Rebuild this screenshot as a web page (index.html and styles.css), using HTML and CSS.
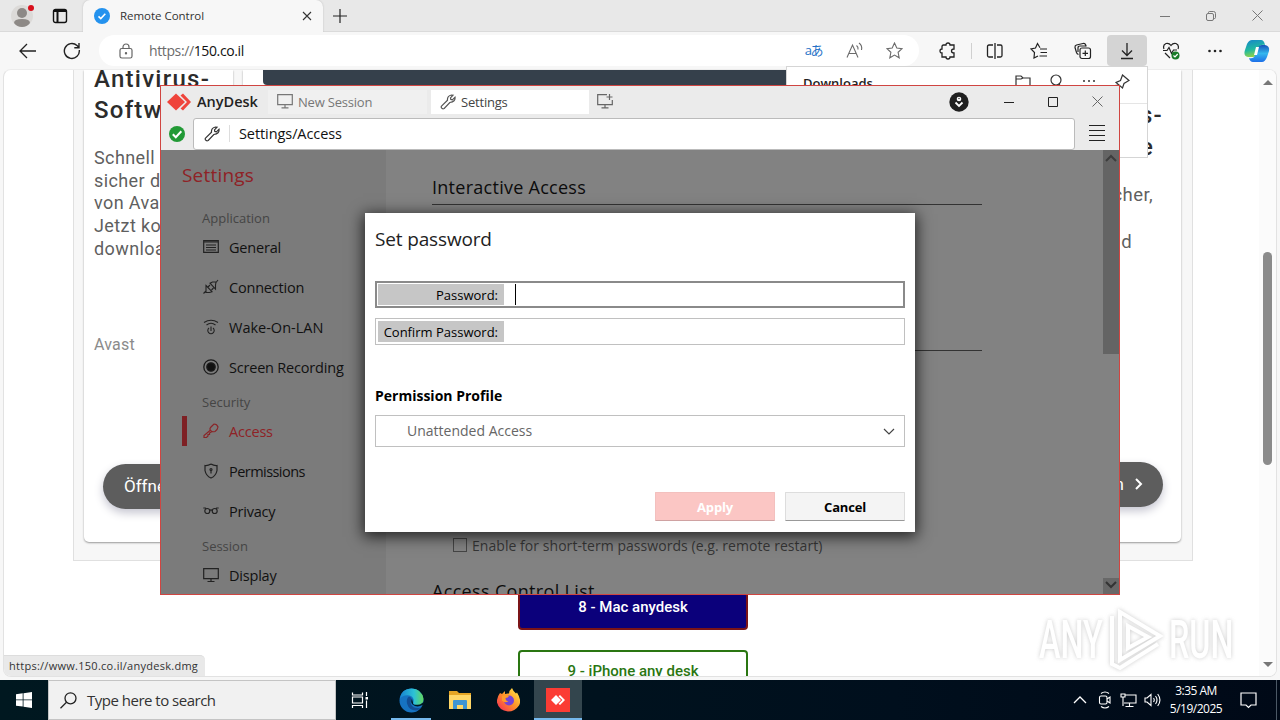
FILE: index.html
```html
<!DOCTYPE html>
<html lang="en">
<head>
<meta charset="utf-8">
<title>Remote Control</title>
<link rel="stylesheet" href="styles.css">
</head>
<body>
<div class="desktop">
  <div class="browser">
    <div class="tabstrip">
      <svg class="profile" width="30" height="32" viewBox="0 0 30 32"><circle cx="14" cy="16" r="11" fill="#dcdad8"/><circle cx="14" cy="13" r="5" fill="#8d8986"/><path d="M6 23q0-4 8-4t8 4q-3 4-8 4t-8-4" fill="#8d8986"/><circle cx="23" cy="8" r="3" fill="#d80f1c"/></svg>
      <svg class="workspace" width="16" height="16" viewBox="0 0 16 16" fill="none" stroke="#111" stroke-width="1.4"><rect x="1.5" y="1.500" width="13" height="13" rx="2"/><path d="M2 3h12M5.500 4v10" stroke-width="2"/></svg>
      <div class="tab">
        <svg width="16" height="16" viewBox="0 0 16 16"><circle cx="8" cy="8" r="8" fill="#2492ee"/><path d="M4.500 8.300l2.300 2.200 4.500-4.700" fill="none" stroke="#fff" stroke-width="1.600"/></svg>
        <span class="tab-title">Remote Control</span>
        <svg width="10" height="10" viewBox="0 0 10 10" stroke="#333" stroke-width="1.100"><path d="M1 1l8 8M9 1l-8 8"/></svg>
      </div>
      <svg class="newtab" width="14" height="14" viewBox="0 0 14 14" stroke="#222" stroke-width="1.200"><path d="M0 7h14M7 0v14"/></svg>
      <div class="winbtns">
        <svg width="10" height="10" viewBox="0 0 10 10" stroke="#777"><path d="M0 5.500h10"/></svg>
        <svg width="10" height="10" viewBox="0 0 10 10" stroke="#777" fill="none"><rect x=".5" y="2.500" width="7" height="7" rx="1.500"/><path d="M2.500 2V1.500q0-1 1-1h4q2 0 2 2v4q0 1-1 1H8"/></svg>
        <svg width="11" height="11" viewBox="0 0 11 11" stroke="#777"><path d="M.5.500l10 10M10.500.500l-10 10"/></svg>
      </div>
    </div>
    <div class="toolbar">
      <svg class="back" width="18" height="16" viewBox="0 0 18 16" fill="none" stroke="#222" stroke-width="1.300"><path d="M17 8H1.500M8 1L1 8l7 7"/></svg>
      <svg class="reload" width="18" height="18" viewBox="0 0 18 18" fill="none" stroke="#222" stroke-width="1.400"><path d="M16.300 8A7.500 7.500 0 1 1 14 3.500L16 5.500M16 1v4.700h-4.700"/></svg>
      <div class="omnibox">
        <svg class="lock" width="14" height="16" viewBox="0 0 14 16" fill="none" stroke="#666" stroke-width="1.200"><rect x="1" y="5.500" width="12" height="9.500" rx="1.800"/><path d="M4 5.500V4a3 3 0 0 1 6 0v1.500"/><circle cx="7" cy="10.300" r=".6" fill="#666"/></svg>
        <span class="url"><i>https://</i>150.co.il</span>
        <span class="translate">aあ</span>
        <svg class="read" width="18" height="17" viewBox="0 0 18 17" fill="none" stroke="#6b6b6b" stroke-width="1.100"><path d="M1 15.500L6.500 3 12 15.500M3 11.500h7M10.500 3.500q2 1.500 1.500 4M13 1q3.500 2.500 2.500 7"/></svg>
        <svg class="star" width="17" height="17" viewBox="0 0 17 17" fill="none" stroke="#6b6b6b" stroke-width="1.100"><path d="M8.500 1l2.300 5 5.200.6-3.900 3.700 1.100 5.500-4.700-2.700-4.700 2.700 1.100-5.500L1 6.600 6.200 6z"/></svg>
      </div>
      <div class="tools">
        <svg width="18" height="18" viewBox="0 0 18 18" fill="none" stroke="#222" stroke-width="1.300"><path d="M4.500 3H7q0-2 2-2t2 2h4v4q-2.500 0-2.500 2t2.500 2v4h-4q0 2-2 2t-2-2H3v-4q-2 0-2-2t2-2V4.500Q3 3 4.500 3z"/></svg>
        <b class="sep"></b>
        <svg width="18" height="16" viewBox="0 0 18 16" fill="none" stroke="#222" stroke-width="1.300"><path d="M7 2H3Q1.500 2 1.500 3.500v9Q1.500 14 3 14h4M11 2h3.500Q16 2 16 3.500v9q0 1.500-1.500 1.500H11M9 0v16"/></svg>
        <svg width="18" height="18" viewBox="0 0 18 18" fill="none" stroke="#222" stroke-width="1.200"><path d="M10 5.700L7.500 1.500 5.500 6 1 7l3.500 3.500L4 16l4-2M10 7h7M10.500 10.500H17M9.500 14H17"/></svg>
        <svg width="18" height="18" viewBox="0 0 18 18" fill="none" stroke="#222" stroke-width="1.200"><rect x="6" y="6" width="10.500" height="10.500" rx="2"/><path d="M11.300 8.500v5.500M8.500 11.300H14M4.500 12.500Q3 12 2.500 10.500L1 5.500Q.7 3.500 2.500 3L9 1.500q2-.5 2.700 1.500l.5 1.500M4 10V6q0-2 2-2h6"/></svg>
        <span class="dl"><svg width="14" height="18" viewBox="0 0 14 18" fill="none" stroke="#222" stroke-width="1.300"><path d="M7 1v12M2 8.500l5 5 5-5M1 16.500h12"/></svg></span>
        <svg width="18" height="18" viewBox="0 0 18 18" fill="none" stroke="#222" stroke-width="1.200"><path d="M2 7q-1.500-4 2-5.500 3-.8 5 2 2-2.800 5-2 3.500 1.500 2 5.500M1 8.500h4l2-3 2.500 6L11.500 8H15M3 11l5 5"/><circle cx="13.500" cy="13.500" r="4" fill="#197b28" stroke="none"/><path d="M11.500 13.500l1.500 1.500 2.700-3" stroke="#fff"/></svg>
        <svg width="18" height="18" viewBox="0 0 18 18" fill="#222"><circle cx="3.500" cy="9" r="1.300"/><circle cx="9" cy="9" r="1.300"/><circle cx="14.500" cy="9" r="1.300"/></svg>
        <svg width="26" height="24" viewBox="0 0 26 24"><defs><linearGradient id="ca" x2=".3" y2="1"><stop stop-color="#1684cc"/><stop offset=".6" stop-color="#20b9a0"/><stop offset="1" stop-color="#8ed34b"/></linearGradient><linearGradient id="cb" x2="0" y2="1"><stop stop-color="#1553b8"/><stop offset=".5" stop-color="#33b7ee"/><stop offset="1" stop-color="#1d6fe8"/></linearGradient></defs><path d="M8 1h9q3 0 4 5-5-1-6 3l-2 6q-1 3-4 3H4q-5-1-3-7l2-6q2-4 5-4" fill="url(#ca)"/><path d="M18 6h3q5 1 4 6l-2 6q-2 5-5 5H9q-3 0-4-4 5 1 6-3l3-7q1-3 4-3" fill="url(#cb)"/><path d="M12 8h3l-2 8h-3z" fill="#fff"/></svg>
      </div>
    </div>
    <div class="viewport">
      <div class="page">
        <div class="frame">
          <section class="card card-left">
            <h3>Antivirus-<br>Softw</h3>
            <p>Schnell<br>sicher d<br>von Ava<br>Jetzt ko<br>downloa</p>
            <small>Avast</small>
            <div class="pill">Öffne</div>
          </section>
          <section class="card card-mid"><div class="banner"></div></section>
          <section class="card card-right">
            <h3>s-<br><span>e</span></h3>
            <p>cher,<br><br><span>d</span></p>
            <div class="pill"><span>n</span><svg width="8" height="12" viewBox="0 0 8 12" fill="none" stroke="#fff" stroke-width="2"><path d="M1 1l5 5-5 5"/></svg></div>
          </section>
        </div>
        <div class="links">
          <a class="link mac">8 - Mac anydesk</a>
          <a class="link iphone">9 - iPhone any desk</a>
        </div>
      </div>
      <div class="scroll"><i class="up"></i><i class="thumb"></i><i class="down"></i></div>
      <div class="status">https://www.150.co.il/anydesk.dmg</div>
      <div class="watermark"><span>ANY</span><svg width="60" height="64" viewBox="0 0 60 64" fill="none" stroke="#fff" stroke-width="4"><path d="M15 4v40M15 4L55 28 15 52zM7 8v48l8 4 38-24M23 18l20 11-20 11z" /></svg><span>RUN</span></div>
    </div>
    <div class="downloads">
      <div class="downloads-head"><span>Downloads</span>
        <svg width="16" height="16" viewBox="0 0 16 16" fill="none" stroke="#333" stroke-width="1.200"><path d="M1 14V2h5l2 2h7v10zM1 5h5l2-1"/></svg>
        <svg width="16" height="16" viewBox="0 0 16 16" fill="none" stroke="#333" stroke-width="1.200"><circle cx="8" cy="6" r="5"/><path d="M11 10l4 5"/></svg>
        <svg width="16" height="16" viewBox="0 0 16 16" fill="#333"><circle cx="3" cy="7" r="1"/><circle cx="8" cy="7" r="1"/><circle cx="13" cy="7" r="1"/></svg>
        <svg width="16" height="16" viewBox="0 0 16 16" fill="none" stroke="#333" stroke-width="1.200"><path d="M8.500 1L15 6.500 10 9.500 8.500 14 2 8.500l4.500-2zM5 11l-4 .5"/></svg>
      </div>
    </div>
  </div>

  <div class="anydesk">
    <div class="ad-title">
      <div class="ad-brand"><svg width="24" height="18" viewBox="0 0 24 18"><path d="M0 9l9-8.500L18 9l-9 8.500z" fill="#ef443b"/><path d="M13.500 2.500L16 .5 24 9l-8 8.500-2.500-2L20 9z" fill="#ef443b"/></svg><span>AnyDesk</span></div>
      <div class="ad-tab"><svg width="16" height="15" viewBox="0 0 16 15" fill="none" stroke="#777" stroke-width="1.200"><path d="M.7.700h14.600v10H.7zM8 11v2.500M4.500 13.800h7"/></svg><span>New Session</span></div>
      <div class="ad-tab active"><svg width="16" height="16" viewBox="0 0 16 16" fill="none" stroke="#555" stroke-width="1.200"><path d="M1.500 12.200l6-6Q7 2 11.500 1l1.500.2-2.500 2.700.3 1.500 1.600.4L15 3.200q.7 4.500-5.200 5.300l-5.600 6q-1.700.8-2.700-.6-.6-1 0-1.700"/></svg><span>Settings</span></div>
      <svg class="ad-new" width="16" height="15" viewBox="0 0 16 15" fill="none" stroke="#666" stroke-width="1.200"><path d="M10 .7H.7v10h14.600V6M8 11v2.500M4.500 13.800h7M12.500 0v6M9.500 3h6"/></svg>
      <svg class="ad-discover" width="20" height="20" viewBox="0 0 20 20"><circle cx="10" cy="10" r="9.700" fill="#202020"/><circle cx="10" cy="7" r="2.300" fill="#fff"/><circle cx="10" cy="6.500" r=".7" fill="#202020"/><path d="M6.500 10.500L10 14l3.500-3.500" fill="none" stroke="#fff" stroke-width="1.800"/></svg>
      <div class="ad-btns"><svg width="10" height="10" viewBox="0 0 10 10" stroke="#222"><path d="M0 5.500h10"/></svg><svg width="10" height="10" viewBox="0 0 10 10" stroke="#222" fill="none"><path d="M.5.500h9v9h-9z"/></svg><svg width="11" height="11" viewBox="0 0 11 11" stroke="#666"><path d="M.5.500l10 10M10.500.500l-10 10"/></svg></div>
    </div>
    <div class="ad-address">
      <svg class="ok" width="16" height="16" viewBox="0 0 16 16"><circle cx="8" cy="8" r="8" fill="#229a36"/><path d="M3.800 8.200l3 3 5.500-6" fill="none" stroke="#fff" stroke-width="2"/></svg>
      <div class="ad-field"><svg width="16" height="16" viewBox="0 0 16 16" fill="none" stroke="#333" stroke-width="1.200"><path d="M1.500 12.200l6-6Q7 2 11.500 1l1.500.2-2.500 2.700.3 1.500 1.600.4L15 3.200q.7 4.500-5.200 5.300l-5.600 6q-1.700.8-2.700-.6-.6-1 0-1.700"/></svg><b></b><span>Settings/Access</span></div>
      <svg class="menu" width="16" height="17" viewBox="0 0 16 17" stroke="#222"><path d="M0 .5h16M0 5.500h16M0 10.500h16M0 15.500h16"/></svg>
    </div>
    <div class="ad-body">
      <nav class="side">
        <h1>Settings</h1>
        <h4 class="n-app">Application</h4>
        <div class="item n-gen"><svg width="16" height="16" viewBox="0 0 16 16" fill="none" stroke="#222" stroke-width="1.200"><path d="M.7 1.700h14.600v11.600H.7zM.7 3h14.600M3 6h10M3 8.500h10M3 11h10"/></svg><span>General</span></div>
        <div class="item n-con"><svg width="16" height="16" viewBox="0 0 16 16" fill="none" stroke="#222" stroke-width="1.100"><path d="M.5 14.500L3 12M13 3.500l2-2.500M3 6.500l6 6.200-2.500.8H3V9.500zM7 4.200l5.500 6V6l.5-3H9.500zM5 8l2-2M8.500 11l2-2"/></svg><span>Connection</span></div>
        <div class="item n-wol"><svg width="16" height="16" viewBox="0 0 16 16" fill="none" stroke="#222" stroke-width="1.100"><path d="M1 3.500q7-4.500 14 0M3.500 6q4.500-3.500 9 0M6 9a3.200 3.200 0 1 0 4 0M8 7.500V12"/></svg><span>Wake-On-LAN</span></div>
        <div class="item n-rec"><svg width="16" height="16" viewBox="0 0 16 16" fill="none" stroke="#1c1c1c" stroke-width="1.300"><circle cx="8" cy="8" r="7.200"/><circle cx="8" cy="8" r="4.200" fill="#111"/></svg><span>Screen Recording</span></div>
        <h4 class="n-sec">Security</h4>
        <div class="item n-acc on"><svg width="16" height="16" viewBox="0 0 16 16" fill="none" stroke="#8a2427" stroke-width="1.200"><path d="M8 4l3-3q3 0 4 3-.5 3-3 4.500-3 .8-4.300-1Q6 6 8 4M7 7.500l-6 5v2h2.500L5 13v-1.500h1.500V10L9 8.500"/></svg><span>Access</span></div>
        <div class="item n-per"><svg width="16" height="16" viewBox="0 0 16 16" fill="none" stroke="#222" stroke-width="1.200"><path d="M8 1q3 1.800 6 1.500v5Q13 13 8 15 3 13 2 7.500v-5Q5 2.800 8 1M8 7v3.500"/><circle cx="8" cy="6.500" r="1"/></svg><span>Permissions</span></div>
        <div class="item n-pri"><svg width="16" height="16" viewBox="0 0 16 16" fill="none" stroke="#222" stroke-width="1.200"><circle cx="4.300" cy="8" r="2.500"/><circle cx="11.700" cy="8" r="2.500"/><path d="M6.500 7.500q1.500-1.300 3 0M.3 5h2l1 .8M15.700 5h-2l-1 .8"/></svg><span>Privacy</span></div>
        <h4 class="n-ses">Session</h4>
        <div class="item n-dis"><svg width="16" height="16" viewBox="0 0 16 16" fill="none" stroke="#222" stroke-width="1.200"><path d="M.7 1.700h14.600v10H.7zM8 12v2.500M4.500 14.500h7"/></svg><span>Display</span></div>
      </nav>
      <main class="main">
        <h2>Interactive Access</h2>
        <div class="rule"></div>
        <label class="check"><i></i><span>Enable for short-term passwords (e.g. remote restart)</span></label>
        <h2 class="acl">Access Control List</h2>
      </main>
      <div class="ad-scroll"><svg width="12" height="8" viewBox="0 0 12 8" fill="none" stroke="#3d3d3d" stroke-width="2"><path d="M1 7l5-5 5 5"/></svg><svg class="dn" width="12" height="8" viewBox="0 0 12 8" fill="none" stroke="#333" stroke-width="2"><path d="M1 1l5 5 5-5"/></svg></div>
    </div>
    <div class="dialog">
      <h2>Set password</h2>
      <div class="input focus"><label>Password:</label><i class="caret"></i></div>
      <div class="input"><label>Confirm Password:</label></div>
      <h5>Permission Profile</h5>
      <div class="select"><span>Unattended Access</span><svg width="12" height="7" viewBox="0 0 12 7" fill="none" stroke="#444" stroke-width="1.200"><path d="M1 1l5 5 5-5"/></svg></div>
      <div class="actions"><button class="apply">Apply</button><button class="cancel">Cancel</button></div>
    </div>
  </div>

  <div class="taskbar">
    <div class="start"><svg width="16" height="16" viewBox="0 0 16 16" fill="#fff"><path d="M0 2.300L6.700 1.300v6.200H0zM7.500 1.200L16 0v7.500H7.500zM0 8.300h6.700v6.300L0 13.700zM7.500 8.300H16V16l-8.500-1.200z"/></svg></div>
    <div class="search"><svg width="17" height="17" viewBox="0 0 17 17" fill="none" stroke="#222" stroke-width="1.300"><circle cx="10.500" cy="6.300" r="5.500"/><path d="M6.500 10.300L.5 16.300"/></svg><span>Type here to search</span></div>
    <div class="app view"><svg width="18" height="18" viewBox="0 0 18 18" fill="none" stroke="#fff" stroke-width="1.200"><path d="M1.500 1.500v2.500h10V1.500M1.500 6h10v6h-10zM1.500 17v-2.500h10V17M15.500 1v4M15.500 9.500V17"/><path d="M14.500 6h2.500v2.500h-2.500z" fill="#fff" stroke="none"/></svg></div>
    <div class="app run"><svg width="25" height="25" viewBox="0 0 25 25"><defs><linearGradient id="ea"><stop stop-color="#1781d0"/><stop offset=".6" stop-color="#2cc2d6"/><stop offset="1" stop-color="#65d85c"/></linearGradient></defs><circle cx="12.500" cy="12.500" r="12" fill="#1673c2"/><path d="M.8 11Q2 .5 12.500.5 23 1 24.500 11q0 6-7 6-4-.5-3-3 1-5-4-6.500Q4 6.500.8 11" fill="url(#ea)"/><path d="M10 8.500q-3 2-2 7 2 7 9 7 3-.5 5-3-7 2-10-3-1-3 1-5-1-2.500-3-3" fill="#124e95"/><path d="M13 11q-1.800 3 .5 5.500 4.500 3.500 10 .5l1.500 2V14l-4 2.500q-8 1.300-7-2z" fill="#001821"/></svg></div>
    <div class="app"><svg width="22" height="20" viewBox="0 0 22 20"><path d="M0 1h8l2 2h12v16H0z" fill="#e5a524"/><path d="M0 5h22v14H0z" fill="#ffd767"/><path d="M4 19v-8q0-1 1-1h12q1 0 1 1v8h-4v-4H8v4z" fill="#3f95d3"/></svg></div>
    <div class="app"><svg width="23" height="24" viewBox="0 0 23 24"><defs><linearGradient id="ff" x1="1" x2="0" y2="1"><stop stop-color="#fff34d"/><stop offset=".5" stop-color="#ff9128"/><stop offset="1" stop-color="#f5205c"/></linearGradient></defs><path d="M3 5l2 1 3-3v3q2-.8 4-.5 0-3 3-5.500 1 3 4 5.500l1-1q5 8 2 13-4 6-11 6-9-1-11-9-.5-5 3-9.500" fill="url(#ff)"/><circle cx="12" cy="12.500" r="5" fill="#7543d5"/><path d="M5 8q4-2 7 0-1 2-3.500 2 0 3 3 3.500-4 2-6.500-1" fill="#ff9b2a"/></svg></div>
    <div class="app run current"><svg width="24" height="24" viewBox="0 0 24 24"><path d="M0 0h24v24H0z" fill="#fb3c34"/><path d="M5 12l5-5 5 5-5 5zM12.500 8.300L14 7l5 5-5 5-1.500-1.300L16.300 12z" fill="#fff"/></svg></div>
    <div class="tray">
      <svg width="14" height="8" viewBox="0 0 14 8" fill="none" stroke="#fff" stroke-width="1.300"><path d="M1 7l6-6 6 6"/></svg>
      <svg class="meet" width="14" height="18" viewBox="0 0 14 18" fill="none" stroke="#fff" stroke-width="1.100"><path d="M3 2.500q4-3 8 0M3 15.500q4 3 8 0"/><rect x="1.500" y="5" width="7.500" height="8" rx="1.500"/><path d="M9 8l3-2v6l-3-2"/></svg>
      <svg class="net" width="17" height="15" viewBox="0 0 17 15" fill="none" stroke="#fff" stroke-width="1.100"><path d="M5 2h11v8H4M9.500 10v3.500M5.500 13.500h8M1 1h4v3H1zM3 4v9"/></svg>
      <svg class="vol" width="17" height="14" viewBox="0 0 17 14" fill="none" stroke="#fff" stroke-width="1.100"><path d="M1 5h2l4-3.500v11L3 9H1zM9.500 5q1.500 2 0 4M11.500 3q3 4 0 8M13.700 1q4.500 6 0 12"/></svg>
      <div class="clock">3:35 AM<br>5/19/2025</div>
      <svg class="note" width="18" height="17" viewBox="0 0 18 17" fill="none" stroke="#fff" stroke-width="1.200"><path d="M1 1h15v12h-5l-2.500 2.500L6 13H1z"/></svg>
      <i class="peek"></i>
    </div>
  </div>
</div>
</body>
</html>
```
FILE: styles.css
```css
* { box-sizing: border-box; }
body { margin: 0; font-family: "Open Sans", "Noto Sans", "Noto Sans CJK JP", sans-serif; }
h1, h2, h3, h4, h5, p { margin: 0; font-weight: 400; }
svg { display: block; flex: none; }
span, label, .clock, .status, button { white-space: nowrap; }
.desktop { position: relative; width: 1280px; height: 720px; overflow: hidden; display: flex; flex-direction: column; }

.browser { position: relative; height: 680px; background: #f7f7f7; display: flex; flex-direction: column; }
.tabstrip { height: 32px; background: #e8e8e8; display: flex; align-items: center; border-bottom: 1px solid #dadada; }
.profile { margin-left: 8px; }
.workspace { margin-left: 14px; }
.tab { align-self: stretch; height: 32px; width: 240px; margin-left: 15px; padding: 0 11px; display: flex; align-items: center; background: #f7f7f7; border-radius: 7px 7px 0 0; box-shadow: 0 0 2px #bbb; clip-path: inset(0 -3px 0 -3px); }
.tab-title { flex: 1; margin: -2px 0 0 10px; font-size: 11.5px; letter-spacing: -.03px; color: #333; }
.newtab { margin-left: 10px; }
.winbtns { margin-left: auto; margin-right: 17px; display: flex; gap: 36px; align-items: center; }
.toolbar { height: 37px; display: flex; align-items: center; }
.back { margin-left: 19px; }
.reload { margin-left: 26px; }
.omnibox { width: 820px; height: 31px; margin-left: 18px; border-radius: 16px; background: #fff; display: flex; align-items: center; }
.lock { margin-left: 20px; }
.url { margin-left: 16px; flex: 1; font-size: 14px; letter-spacing: -.38px; color: #111; }
.url i { font-style: normal; color: #6b6b6b; }
.translate { color: #2672c7; font-size: 13px; letter-spacing: -1.5px; margin-top: -3px; }
.read { margin-left: 24px; }
.star { margin-left: 22px; margin-right: 16px; }
.tools { display: flex; align-items: center; margin-left: 20px; }
.sep { width: 1px; height: 16px; background: #d0d0d0; margin: 0 14px 0 14px; }
.tools svg + svg { margin-left: 26px; }
.dl { width: 40px; height: 31px; margin: 0 15px; background: #d4d4d4; border-radius: 4px; display: flex; align-items: center; justify-content: center; }
.tools > svg:last-child { margin-left: 20px; }

.viewport { position: relative; width: 1274px; height: 608px; margin-left: 3px; background: #fff; border: 1px solid #e2e2e2; border-top-color: #ececec; border-radius: 8px; overflow: hidden; display: flex; }
.page { width: 1255px; padding-left: 69px; }
.frame { width: 1120px; height: 491px; padding: 0 11px 18px 10px; display: flex; gap: 10px; background: #f7f7f7; border: 1px solid #e0e0e0; border-top: 0; }
.card { background: #fff; box-shadow: 0 1px 2px #999; border-radius: 0 0 5px 5px; overflow: hidden; clip-path: inset(0 -3px -4px -3px); }
.card h3 { font: 500 24px/31px Roboto, sans-serif; letter-spacing: 1.25px; color: #2c2c2c; }
.card p { font: 18px/22.700px Roboto, sans-serif; letter-spacing: .4px; color: #5f5f5f; }
.card-left { width: 149px; padding: 0 0 0 10px; }
.card-left h3 { margin-top: -6px; }
.card-left p { margin-top: 21px; }
.card-left small { display: block; margin-top: 73px; font: 16px/22px Roboto, sans-serif; letter-spacing: .2px; color: #8b8b8b; }
.pill { height: 45px; background: #5d5d5d; color: #fff; font: 17px/45px Roboto, sans-serif; box-shadow: 0 4px 10px #c5c5d0; }
.card-left .pill { margin: 108px 0 0 9px; padding-left: 21px; border-radius: 23px 0 0 23px; }
.card-mid { flex: 1; padding-left: 20px; }
.banner { height: 15px; background: #35404b; border-radius: 0 0 0 4px; }
.card-right { width: 140px; text-align: right; padding-right: 18px; }
.card-right h3 { margin-top: 29px; line-height: 32px; }
.card-right h3 span { margin-right: 9px; }
.card-right p { margin: 21px 10px 0 0; font-size: 18.500px; line-height: 23.500px; }
.card-right p span { margin-right: 21px; }
.card-right .pill { margin-top: 207px; border-radius: 0 23px 23px 0; display: flex; align-items: center; justify-content: flex-end; gap: 11px; padding-right: 20px; }
.links { padding: 13px 0 0 445px; }
.link { display: block; width: 230px; height: 46px; border: 2px solid #7b1418; border-radius: 4px; font: 500 15px/43px Roboto, sans-serif; text-align: center; }
.mac { background: #0b007b; color: #fff; margin-top: 10px; }
.iphone { border-color: #2a7611; color: #2a7611; margin-top: 20px; line-height: 38px; }
.scroll { width: 17px; background: #fbfbfb; display: flex; flex-direction: column; align-items: center; padding: 10px 0 9px; margin-left: 1px; }
.up { border: 5px solid transparent; border-top: 0; border-bottom: 5px solid #777; }
.thumb { width: 9px; height: 213px; margin-top: 167px; background: #8b8b8b; border-radius: 5px; }
.down { margin-top: auto; border: 5px solid transparent; border-bottom: 0; border-top: 5px solid #777; }
.status { position: absolute; left: 0; bottom: 0; width: 201px; height: 21px; padding-left: 5px; background: #e9e9e9; border-top: 1px solid #ddd; border-radius: 0 5px 0 0; font-size: 11px; letter-spacing: .27px; line-height: 20px; color: #333; }
.watermark { position: absolute; left: 1035px; top: 538px; display: flex; align-items: center; filter: drop-shadow(0 0 2px #b5b5b5); opacity: .7; }
.watermark span { width: 62px; font: 500 53px/64px Roboto, sans-serif; color: #fff; transform: scaleX(.61); transform-origin: left; }
.watermark svg { margin: 0 4px 0 4px; }
.downloads { position: absolute; left: 786px; top: 66px; width: 362px; height: 92px; background: #fff; border: 1px solid #d5d5d5; }
.downloads-head { height: 37px; border-bottom: 1px solid #e5e5e5; display: flex; gap: 17px; padding: 7px 17px 0 16px; }
.downloads-head span { flex: 1; font-size: 13px; line-height: 18px; font-weight: 600; color: #222; }

.anydesk { position: absolute; left: 160px; top: 85px; width: 960px; height: 510px; background: #ebebeb; border: 1px solid #d04541; display: flex; flex-direction: column; }
.ad-title { height: 31px; display: flex; align-items: center; }
.ad-brand { width: 107px; padding-left: 6px; display: flex; align-items: center; gap: 6px; font-size: 14.500px; font-weight: 600; letter-spacing: 0; color: #222; }
.ad-tab { width: 159px; height: 24px; margin-right: 4px; padding-left: 9px; display: flex; align-items: center; gap: 5px; background: #f0f0f0; font-size: 13px; letter-spacing: -.2px; color: #777; }
.ad-tab span { padding-top: 1px; }
.ad-tab.active { width: 158px; margin-right: 8px; background: #fff; color: #444; }
.ad-discover { margin-left: auto; }
.ad-btns { display: flex; gap: 34px; align-items: center; margin: 0 17px 0 35px; }
.ad-title .ad-btns { margin-right: 16px; }
.ad-address { height: 33px; display: flex; align-items: center; }
.ok { margin-left: 8px; }
.ad-field { width: 882px; height: 32px; margin-left: 8px; padding-left: 10px; display: flex; align-items: center; background: #fff; border: 1px solid #bbb; border-radius: 3px; font-size: 14.500px; letter-spacing: -.08px; color: #111; }
.ad-field b { width: 1px; height: 17px; margin: 0 9px; background: #ddd; }
.menu { margin-left: 14px; }
.ad-body { height: 444px; background: #828282; display: flex; overflow: hidden; }
.side { width: 225px; background: #7b7b7b; }
.side h1 { height: 53px; padding-left: 21px; font-size: 19px; line-height: 51px; letter-spacing: .2px; color: #8f2226; }
.side h4 { height: 24px; padding: 5px 0 0 41px; font-size: 13px; line-height: 20px; color: #454545; }
.item { height: 40px; padding-left: 42px; display: flex; align-items: center; gap: 10px; font-size: 14.500px; letter-spacing: -.2px; color: #111; }
.n-per { letter-spacing: -.55px; }
.n-wol { letter-spacing: 0; }
.item.on { color: #8f2226; position: relative; }
.item.on::before { content: ""; position: absolute; left: 21px; top: 5px; width: 5px; height: 30px; background: #7e2024; }
.main { width: 717px; padding: 21px 0 0 46px; }
.main h2 { width: 550px; height: 34px; border-bottom: 1px solid #333; font-size: 18px; line-height: 33px; color: #0c0c0c; letter-spacing: .27px; }
.rule { width: 550px; height: 146px; border-bottom: 1px solid #333; }
.check { display: flex; align-items: center; height: 20px; margin: 184px 0 0 21px; gap: 5px; font-size: 14px; letter-spacing: .05px; color: #363636; }
.check i { width: 14px; height: 14px; border: 1px solid #454545; }
.main .acl { border: 0; margin-top: 20px; letter-spacing: .33px; }
.ad-scroll { width: 16px; display: flex; flex-direction: column; align-items: center; padding-top: 4px; background: linear-gradient(#646464 0 204px, #828282 204px 428px, #686868 428px); }
.ad-scroll .dn { margin: auto 0 5px; }

.dialog { position: absolute; left: 204px; top: 127px; width: 550px; height: 319px; background: #fff; box-shadow: 0 3px 14px 2px rgba(0,0,0,.7); padding: 10px; }
.dialog h2 { height: 58px; font-size: 19px; line-height: 32px; letter-spacing: -.15px; color: #222; }
.input { height: 27px; margin-bottom: 10px; padding: 2px; border: 1px solid #c0c0c0; display: flex; }
.input.focus { border: 2px solid #8a8a8a; padding: 1px; }
.input label { width: 126px; height: 21px; background: #c6c6c6; padding-right: 6px; text-align: right; font-size: 13px; line-height: 23px; }
.caret { width: 1px; height: 21px; margin-left: 11px; background: #000; }
.dialog h5 { margin: 41px 0 0; height: 29px; font-size: 14px; line-height: 20px; font-weight: 700; letter-spacing: 0; }
.select { height: 32px; border: 1px solid #c0c0c0; display: flex; align-items: center; justify-content: space-between; padding: 0 9px 0 31px; font-size: 14px; color: #666; }
.select span { margin-top: -2px; }
.actions { display: flex; justify-content: flex-end; gap: 10px; margin-top: 45px; }
.actions button { width: 120px; height: 29px; border: 1px solid #ddd; border-bottom: 1px solid #999; border-radius: 1px; padding: 0; font: 700 13px "Open Sans", sans-serif; letter-spacing: -.2px; background: #f4f4f4; color: #000; }
.actions .apply { background: #fbc6c4; border-color: #f3c0be; border-bottom-color: #cfa2a2; color: #fff; }

.taskbar { height: 40px; display: flex; background: linear-gradient(90deg, #001820, #000f1d 70%, #000917); }
.start { width: 48px; display: flex; align-items: center; justify-content: center; }
.search { width: 288px; height: 40px; padding-left: 11px; display: flex; align-items: center; gap: 10px; background: #f1f1f1; border: 1px solid #c4c4c4; font-size: 15px; letter-spacing: -.5px; color: #333; }
.app { width: 49px; display: flex; align-items: center; justify-content: center; }
.app.view { padding-right: 2px; }
.app.run { border-bottom: 2px solid #76b9ed; width: 40px; margin: 0 4px 0 6px; padding-top: 2px; }
.app.current { width: 48px; margin: 0 0 0 1px; background: #33454d; }
.tray { margin-left: auto; display: flex; align-items: center; }
.meet { margin-left: 11px; }
.net { margin-left: 8px; }
.vol { margin-left: 7px; }
.clock { width: 58px; margin: 0 0 0 6px; font-size: 12px; line-height: 18px; letter-spacing: -.5px; text-align: center; color: #fff; }
.note { margin-left: 15px; }
.peek { width: 1px; height: 40px; margin: 0 3px 0 18px; background: #4b5865; }
```
